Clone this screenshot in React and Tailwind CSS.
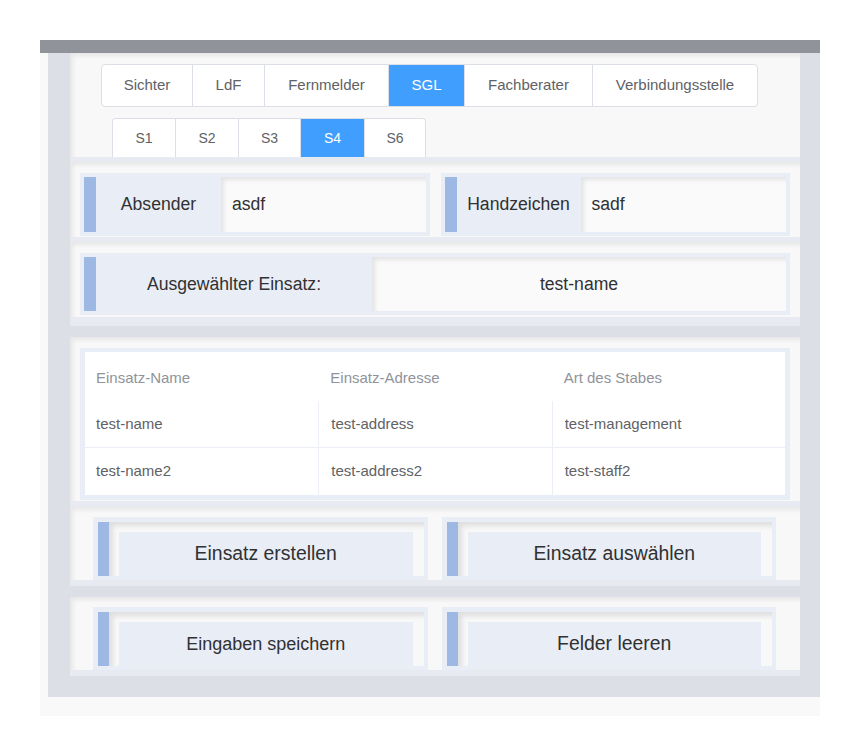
import React from "react";

const tabs1 = [
  ["Sichter", "w-[90px]"],
  ["LdF", "w-[72px]"],
  ["Fernmelder", "w-[124px]"],
  ["SGL", "w-[76px]"],
  ["Fachberater", "w-[128px]"],
  ["Verbindungsstelle", "w-[165px]"],
];
const tabs2 = [
  ["S1", "w-[62px]"],
  ["S2", "w-[63px]"],
  ["S3", "w-[62px]"],
  ["S4", "w-[64px]"],
  ["S6", "w-[61px]"],
];

const rows = [
  ["test-name", "test-address", "test-management"],
  ["test-name2", "test-address2", "test-staff2"],
];

function Section({ children, className = "", stripe = "border-b-[5px]" }) {
  return (
    <div
      className={`bg-[#f8f8f8] shadow-[inset_3px_3px_4px_rgba(0,0,0,0.07)] border-[#e7eaf1] ${stripe} ${className}`}
    >
      {children}
    </div>
  );
}

function InputCard({ label, labelW, value, center, h }) {
  return (
    <div className="flex-1 bg-[#e9edf5] p-[4px] flex">
      <div className="w-[12px] bg-[#9db8e3] shrink-0" />
      <div
        className={`${labelW} shrink-0 flex items-center justify-center text-[17.6px] text-[#303133]`}
      >
        {label}
      </div>
      <div
        className={`flex-1 ${h} bg-[#fafafa] shadow-[inset_3px_3px_4px_rgba(0,0,0,0.09)] flex items-center text-[17.6px] text-[#303133] ${
          center ? "justify-center" : "pl-[11px]"
        }`}
      >
        {value}
      </div>
    </div>
  );
}

function ButtonCard({ label, size }) {
  return (
    <div className="flex-1 bg-[#e9edf5] pl-[5px] pt-[5px] pr-[4px] pb-[4px] flex">
      <div className="w-[11px] bg-[#9db8e3] shrink-0" />
      <div className="flex-1 bg-[#f8f8f8] shadow-[inset_4px_4px_5px_rgba(0,0,0,0.1)] pt-[10px] pl-[10px] pr-[11px]">
        <div
          className={`h-[44px] bg-[#e9edf5] flex items-center justify-center text-[#303133] ${size}`}
        >
          {label}
        </div>
      </div>
    </div>
  );
}

export default function App() {
  return (
    <div
      className="min-h-screen bg-white pt-[40px] pl-[40px]"
      style={{ fontFamily: "'Liberation Sans', Arial, sans-serif" }}
    >
      <div className="w-[780px] h-[676px] bg-[#f9f9f9] flex flex-col">
        <div className="h-[13px] bg-[#909399] shrink-0" />
        <div className="ml-[8px] bg-[#dcdfe6] pl-[22px] pr-[20px] pb-[21px] flex flex-col">
          {/* Group A */}
          <Section className="pt-[11px] h-[109px]">
            <div className="ml-[31px] flex w-fit h-[43px] bg-white border border-[#dcdfe6] rounded-[4px] overflow-hidden text-[15px] text-[#606266]">
              {tabs1.map(([t, w], i) => (
                <div
                  key={t}
                  className={`${w} shrink-0 flex items-center justify-center ${
                    i > 0 ? "border-l border-[#dcdfe6]" : ""
                  } ${t === "SGL" ? "bg-[#409eff] text-white border-[#409eff]" : ""}`}
                >
                  {t}
                </div>
              ))}
            </div>
            <div className="ml-[42px] mt-[11px] flex w-fit h-[39px] bg-white border border-[#dcdfe6] border-b-0 rounded-t-[4px] overflow-hidden text-[14px] text-[#606266]">
              {tabs2.map(([t, w], i) => (
                <div
                  key={t}
                  className={`${w} shrink-0 flex items-center justify-center ${
                    i > 0 ? "border-l border-[#dcdfe6]" : ""
                  } ${t === "S4" ? "bg-[#409eff] text-white border-[#409eff]" : ""}`}
                >
                  {t}
                </div>
              ))}
            </div>
          </Section>

          <Section className="pt-[11px] pb-[1px] px-[10px] flex gap-[11px]">
            <InputCard label="Absender" labelW="w-[125px]" value="asdf" h="h-[55px]" />
            <InputCard label="Handzeichen" labelW="w-[124px]" value="sadf" h="h-[55px]" />
          </Section>

          <Section className="pt-[11px] pb-[2px] px-[10px] flex" stripe="border-b-[9px]">
            <InputCard
              label="Ausgewählter Einsatz:"
              labelW="w-[276px]"
              value="test-name"
              center
              h="h-[54px]"
            />
          </Section>

          {/* Group B */}
          <Section className="mt-[11px] pt-[11px] pb-[1px] px-[10px]" stripe="border-b-[6px]">
            <div className="bg-[#e9edf5] pt-[4px] pb-[5px] px-[5px]">
              <div className="bg-white text-[15px]">
                <div className="grid grid-cols-3 h-[49px] items-center text-[#909399] pt-[3px]">
                  <div className="pl-[11px]">Einsatz-Name</div>
                  <div className="pl-[12px]">Einsatz-Adresse</div>
                  <div className="pl-[12px]">Art des Stabes</div>
                </div>
                {rows.map((r, ri) => (
                  <div
                    key={ri}
                    className={`grid grid-cols-3 h-[47px] text-[#606266] ${
                      ri === 0 ? "border-b border-[#ebeef5]" : ""
                    }`}
                  >
                    {r.map((c, ci) => (
                      <div
                        key={ci}
                        className={`flex items-center ${
                          ci === 0 ? "pl-[11px]" : "pl-[12px] border-l border-[#ebeef5]"
                        }`}
                      >
                        {c}
                      </div>
                    ))}
                  </div>
                ))}
              </div>
            </div>
          </Section>

          <Section className="pt-[10px] pl-[23px] pr-[24px] flex gap-[14px]" stripe="border-b-[6px]">
            <ButtonCard label="Einsatz erstellen" size="text-[19.4px]" />
            <ButtonCard label="Einsatz auswählen" size="text-[19.4px]" />
          </Section>

          {/* Group C */}
          <Section className="mt-[11px] pt-[10px] pl-[23px] pr-[24px] flex gap-[14px]" stripe="border-b-[6px]">
            <ButtonCard label="Eingaben speichern" size="text-[18px]" />
            <ButtonCard label="Felder leeren" size="text-[19.4px]" />
          </Section>
        </div>
      </div>
    </div>
  );
}
